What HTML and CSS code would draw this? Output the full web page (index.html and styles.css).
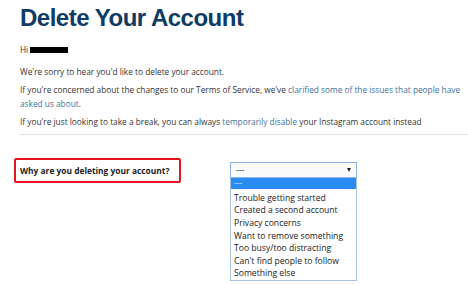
FILE: index.html
```html
<!DOCTYPE html>
<html lang="en">
<head>
    <meta charset="UTF-8">
    <title>Delete Your Account</title>
    <link rel="stylesheet" href="styles.css">
</head>
<body>
    <div class="page">
        <h1 class="title">Delete Your Account</h1>
        <p class="hi">Hi <span class="redacted"></span></p>
        <p>We're sorry to hear you'd like to delete your account.</p>
        <p>If you're concerned about the changes to our Terms of Service, we've <a href="#">clarified some of the issues that people have asked us about</a>.</p>
        <p>If you're just looking to take a break, you can always <a href="#">temporarily disable</a> your Instagram account instead</p>
        <hr class="rule">
        <div class="reason">
            <div class="question">Why are you deleting your account?</div>
            <div class="picker">
                <div class="select">
                    <span>---</span>
                    <span class="arrow"></span>
                </div>
                <ul class="options">
                    <li class="active">---</li>
                    <li>Trouble getting started</li>
                    <li>Created a second account</li>
                    <li>Privacy concerns</li>
                    <li>Want to remove something</li>
                    <li>Too busy/too distracting</li>
                    <li>Can't find people to follow</li>
                    <li>Something else</li>
                </ul>
            </div>
        </div>
    </div>
</body>
</html>
```
FILE: styles.css
```css
body {
    margin: 0;
    background-color: #fff;
    font-family: "Open Sans", "Liberation Sans", sans-serif;
    color: #333;
    overflow: hidden;
}

.page {
    padding: 3px 0 0 20px;
}

.title {
    margin: 0 0 10px;
    font-family: "Liberation Sans", Arial, sans-serif;
    font-size: 24px;
    letter-spacing: -0.5px;
    font-weight: bold;
    color: #0f3b64;
    line-height: 30px;
}

p {
    margin: 0 0 5px;
    font-size: 8.3px;
    line-height: 13.5px;
}

.hi {
    margin-bottom: 8px;
}

.redacted {
    display: inline-block;
    width: 38px;
    height: 6px;
    background-color: #000;
}

a {
    color: #3f729b;
    text-decoration: none;
}

.rule {
    margin: 0;
    border: 0;
    border-top: 1px solid #ddd;
}

.reason {
    display: flex;
    margin: 23px 0 0 -6px;
}

.question {
    width: 159px;
    height: 21px;
    line-height: 21px;
    padding-left: 4px;
    border: 2px solid #e8141b;
    border-radius: 2px;
    font-size: 8.4px;
    font-weight: bold;
    color: #222;
}

.picker {
    margin: 4px 0 0 49px;
    width: 127px;
    font-size: 8.6px;
}

.select {
    display: flex;
    align-items: center;
    justify-content: space-between;
    height: 14px;
    padding: 0 5px;
    border: 1px solid #8fb4e8;
    background-color: #fafafa;
    color: #222;
}

.arrow {
    width: 0;
    height: 0;
    border-left: 2.5px solid transparent;
    border-right: 2.5px solid transparent;
    border-top: 4px solid #222;
}

.options {
    margin: 0;
    padding: 0;
    list-style: none;
    border: 1px solid #aac4e6;
    border-top: 0;
    color: #222;
}

.options li {
    height: 12.6px;
    line-height: 12.6px;
    padding-left: 3px;
}

.options li.active {
    height: 11px;
    line-height: 11px;
    margin-bottom: 3.4px;
    background-color: #2a8cf2;
    color: #cfe4ff;
}
```
